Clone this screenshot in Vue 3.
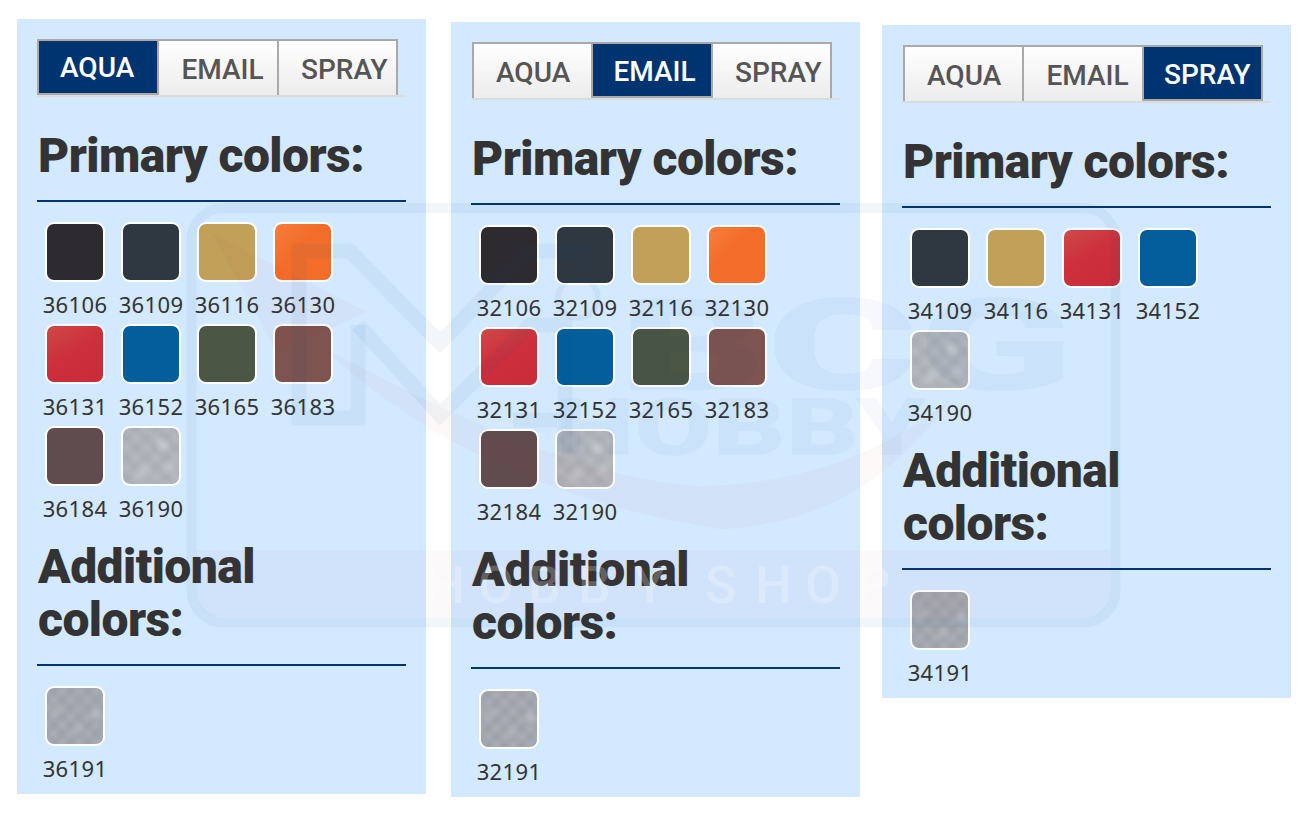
<script setup>
const tabs = ['AQUA', 'EMAIL', 'SPRAY']
const panels = [
  { id: 'p1', active: 'AQUA', primary: [
    ['36106','black'],['36109','slate'],['36116','gold'],['36130','orange'],
    ['36131','red'],['36152','blue'],['36165','green'],['36183','brown'],
    ['36184','umber'],['36190','silver']], additional: [['36191','steel']] },
  { id: 'p2', active: 'EMAIL', primary: [
    ['32106','black'],['32109','slate'],['32116','gold'],['32130','orange'],
    ['32131','red'],['32152','blue'],['32165','green'],['32183','brown'],
    ['32184','umber'],['32190','silver']], additional: [['32191','steel']] },
  { id: 'p3', active: 'SPRAY', primary: [
    ['34109','slate'],['34116','gold'],['34131','red'],['34152','blue'],
    ['34190','silver']], additional: [['34191','steel']] }
]
const shopX = '428 478 528 578 634 705 755 805 857'
</script>

<template>
  <div class="page">
    <section v-for="p in panels" :key="p.id" class="panel" :class="p.id">
      <nav class="tabs">
        <span v-for="t in tabs" :key="t" class="tab" :class="{ active: t === p.active }">{{ t }}</span>
      </nav>
      <h2 class="title first">Primary colors:</h2>
      <div class="grid">
        <div v-for="[code, c] in p.primary" :key="code" class="item">
          <div class="swatch" :class="c"></div>
          <div class="code">{{ code }}</div>
        </div>
      </div>
      <h2 class="title">Additional<br />colors:</h2>
      <div class="grid">
        <div v-for="[code, c] in p.additional" :key="code" class="item">
          <div class="swatch" :class="c"></div>
          <div class="code">{{ code }}</div>
        </div>
      </div>
    </section>

    <svg class="watermark" width="1307" height="830" viewBox="0 0 1307 830" aria-hidden="true">
      <path d="M196 550H1110V590Q1110 617 1083 617H223Q196 617 196 590Z" fill="#a03c50" fill-opacity=".03" />
      <rect x="191.500" y="208" width="924" height="414.500" rx="32" fill="none" stroke="#00468c" stroke-opacity=".05" stroke-width="10" />
      <path d="M212 233L367 312L277 352Z" fill="#c81e1e" fill-opacity=".03" />
      <path d="M322 347C420 440 560 505 720 529C830 525 900 470 950 400C880 455 800 484 700 486C590 480 460 420 322 347Z" fill="#c81e1e" fill-opacity=".03" />
      <g fill="none" stroke="#00468c" stroke-opacity=".05" stroke-width="15" stroke-linejoin="miter">
        <path d="M358 325V418H299V251H350L440 343L528 251H582V272" />
        <path d="M358 325L440 415L530 325H565V452" />
        <path d="M513 420H557" />
        <circle cx="578" cy="298" r="20" stroke-width="6" />
      </g>
      <g class="wm-text" fill="#00468c" fill-opacity=".035">
        <text x="618" y="390" font-size="128" font-weight="900" textLength="456" lengthAdjust="spacingAndGlyphs">BCG</text>
        <text x="555" y="455" font-size="80" font-weight="900" textLength="372" lengthAdjust="spacingAndGlyphs">HOBBY</text>
      </g>
      <text class="wm-text" :x="shopX" y="603" font-size="52" font-weight="500" fill="#fff" fill-opacity=".22">HOBBYSHOP</text>
    </svg>
  </div>
</template>

<style>
html, body { margin: 0; background: #fff; }
</style>

<style scoped>
.page {
  position: relative;
  display: flex;
  align-items: flex-start;
  padding-left: 17px;
  height: 830px;
  overflow: hidden;
  box-sizing: border-box;
  font-family: "Noto Sans", sans-serif;
  color: #333;
}
.panel {
  width: 409px;
  flex: none;
  box-sizing: border-box;
  background: #d3e9ff;
  padding: 20px 20px 6px;
}
.p1 { margin-top: 19px; }
.p2 { margin-top: 22px; margin-left: 25px; }
.p3 { margin-top: 25px; margin-left: 22px; }
.p2 .tabs, .p3 .tabs { padding-left: 1px; }

.tabs {
  display: flex;
  height: 56px;
  border-bottom: 2px solid #dcdcdc;
  box-sizing: content-box;
}
.tab {
  width: 119.5px;
  box-sizing: border-box;
  height: 56px;
  border: 2px solid #a9a9a9;
  border-left-width: 0;
  border-bottom: none;
  padding-left: 22.5px;
  font: 500 28px/58px Roboto, sans-serif;
  color: #555;
  background: linear-gradient(#fff, #ececec);
}
.tab:first-child { border-left-width: 2px; width: 122px; padding-left: 21px; }
.p2 .tab:first-child, .p3 .tab:first-child { width: 121px; padding-left: 22px; }
.tab.active {
  background: #003471;
  color: #fff;
  border-bottom: 2px solid #a9a9a9;
  line-height: 54px;
  margin-bottom: -1px;
}
.tab.active:not(:first-child) { padding-left: 20.5px; line-height: 56px; }

.title {
  margin: 12px 0 0;
  padding: 0 0 18px 1px;
  border-bottom: 2px solid #003471;
  font: 900 48px/53px Roboto, sans-serif;
  letter-spacing: -0.55px;
  color: #333;
}
.title.first { margin-top: 32px; padding-bottom: 18px; }

.grid {
  display: flex;
  flex-wrap: wrap;
  padding-top: 20px;
}
.item { width: 76px; height: 102px; }
.swatch {
  box-sizing: border-box;
  width: 60px;
  height: 60px;
  margin: 0 8px;
  border: 2px solid #fff;
  border-radius: 9px;
}
.code {
  margin-top: 7px;
  text-align: center;
  font-size: 22px;
  letter-spacing: .35px;
  line-height: 30px;
  color: #333;
}

.black { background: #2e2b30; }
.slate { background: #2f3740; }
.gold { background: #c1a15a; }
.orange { background: linear-gradient(135deg, #f77e3a, #f36d2a 40%); }
.red { background: linear-gradient(150deg, #cd4a48, #cd303c 45%, #c92c38); }
.blue { background: #045e9c; }
.green { background: #4b5644; }
.brown { background: #7d5450; }
.umber { background: #604c4e; }
.silver {
  background:
    radial-gradient(circle at 70% 30%, rgba(255,255,255,.28), transparent 16%),
    radial-gradient(circle at 35% 80%, rgba(255,255,255,.2), transparent 18%),
    radial-gradient(circle at 85% 70%, rgba(255,255,255,.18), transparent 16%),
    repeating-linear-gradient(45deg, rgba(255,255,255,.08), transparent 7px, rgba(255,255,255,.08) 14px),
    repeating-linear-gradient(-45deg, rgba(0,0,0,.03), transparent 7px, rgba(0,0,0,.03) 14px),
    #aeb3ba;
}
.steel {
  background:
    radial-gradient(circle at 88% 48%, rgba(255,255,255,.25), transparent 13%),
    radial-gradient(circle at 55% 75%, rgba(255,255,255,.14), transparent 16%),
    radial-gradient(circle at 15% 40%, rgba(255,255,255,.12), transparent 16%),
    repeating-linear-gradient(45deg, rgba(255,255,255,.06), transparent 6px, rgba(255,255,255,.06) 12px),
    repeating-linear-gradient(-45deg, rgba(0,0,0,.04), transparent 6px, rgba(0,0,0,.04) 12px),
    #a3a7af;
}

.watermark {
  position: absolute;
  top: 0;
  left: 0;
  pointer-events: none;
}
.wm-text { font-family: Roboto, sans-serif; }
</style>
